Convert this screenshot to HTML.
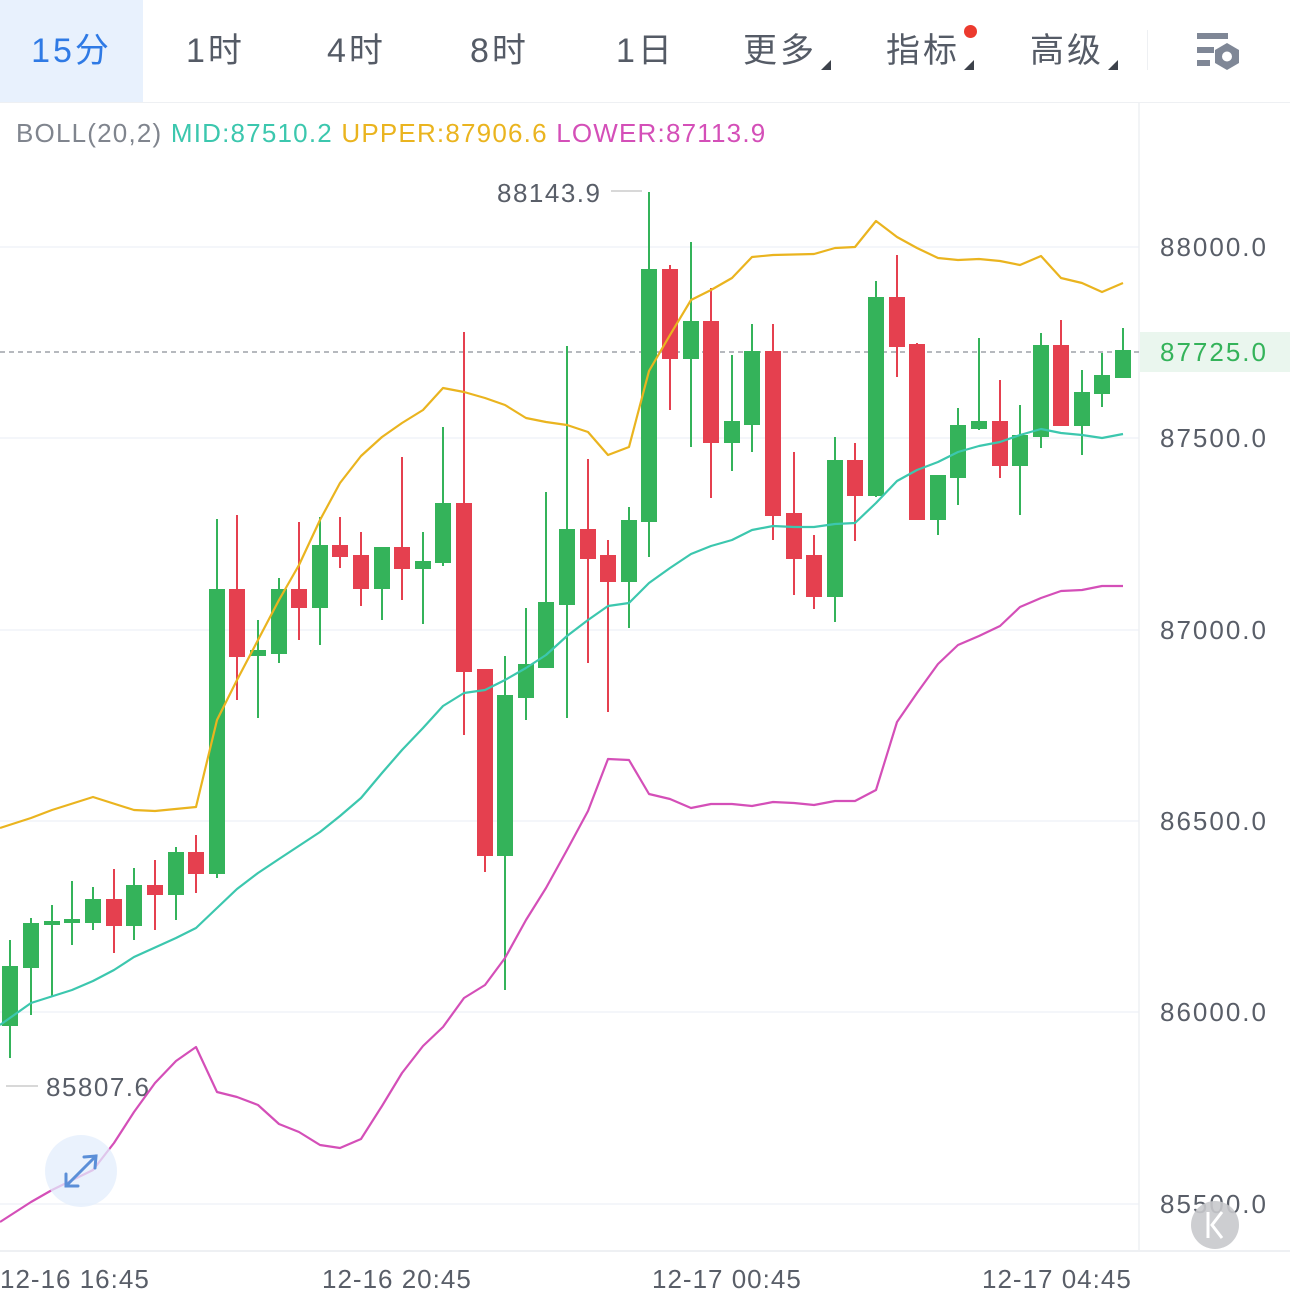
<!DOCTYPE html>
<html><head><meta charset="utf-8"><style>
body{margin:0;width:1290px;height:1293px;background:#fff;overflow:hidden;font-family:"Liberation Sans","Noto Sans CJK SC",sans-serif;position:relative}
.tabs{position:absolute;top:0;left:0;width:1290px;height:102px;border-bottom:1px solid #eef0f3}
.tab{position:absolute;top:0;height:102px;line-height:102px;font-size:34px;color:#555b66;letter-spacing:3px}
.act{left:0;width:143px;background:#e8f1fd;color:#2f7ae5;text-align:center}
.tri{position:absolute;width:0;height:0;border-left:10px solid transparent;border-bottom:10px solid #3d424b}
</style></head><body>
<div class="tabs">
<div class="tab act">15分</div>
<div class="tab" style="left:186px">1时</div>
<div class="tab" style="left:327px">4时</div>
<div class="tab" style="left:470px">8时</div>
<div class="tab" style="left:616px">1日</div>
<div class="tab" style="left:743px">更多</div><div class="tri" style="left:821px;top:60px"></div>
<div class="tab" style="left:886px">指标</div><div class="tri" style="left:964px;top:60px"></div>
<div style="position:absolute;left:964px;top:25px;width:13px;height:13px;border-radius:50%;background:#ec3a2e"></div>
<div class="tab" style="left:1030px">高级</div><div class="tri" style="left:1108px;top:60px"></div>
<div style="position:absolute;left:1147px;top:30px;width:1px;height:40px;background:#eef0f3"></div>
<svg style="position:absolute;left:1190px;top:25px" width="60" height="50" viewBox="1190 25 60 50">
<rect x="1197" y="33" width="31" height="6" fill="#7f8796"/>
<rect x="1197" y="47" width="17" height="6" fill="#7f8796"/>
<rect x="1197" y="60" width="13" height="6" fill="#7f8796"/>
<polygon points="1227,43 1239,50 1239,63 1227,70 1215,63 1215,50" fill="#7f8796"/>
<circle cx="1227" cy="56.5" r="5" fill="#fff"/>
</svg>
</div>
<div style="position:absolute;left:16px;top:118px;font-size:26px;white-space:nowrap;letter-spacing:1.2px"><span style="color:#80858e">BOLL(20,2)</span> <span style="color:#3cc7ae">MID:87510.2</span> <span style="color:#eab41f">UPPER:87906.6</span> <span style="color:#d44fb8">LOWER:87113.9</span></div>
<svg style="position:absolute;left:0;top:0" width="1290" height="1293">
<g stroke="#f0f3f8" stroke-width="1.5">
<line x1="0" y1="247" x2="1139" y2="247"/><line x1="0" y1="438" x2="1139" y2="438"/><line x1="0" y1="630" x2="1139" y2="630"/><line x1="0" y1="821" x2="1139" y2="821"/><line x1="0" y1="1012" x2="1139" y2="1012"/><line x1="0" y1="1204" x2="1139" y2="1204"/>
</g>
<line x1="1139" y1="103" x2="1139" y2="1250" stroke="#eef0f3" stroke-width="1.5"/>
<line x1="0" y1="1251" x2="1290" y2="1251" stroke="#eef0f3" stroke-width="2"/>
<line x1="0" y1="352" x2="1139" y2="352" stroke="#8a8f98" stroke-width="1.2" stroke-dasharray="5,4"/>
<rect x="1140" y="332" width="150" height="40" fill="#eaf6ee"/>
<g font-size="26" fill="#595e68" font-family="Liberation Sans,sans-serif" letter-spacing="2">
<text x="1160" y="256">88000.0</text><text x="1160" y="447">87500.0</text><text x="1160" y="639">87000.0</text><text x="1160" y="830">86500.0</text><text x="1160" y="1021">86000.0</text><text x="1160" y="1213">85500.0</text>
<text x="1160" y="361" fill="#34b35a">87725.0</text>
<text x="497" y="202" letter-spacing="1.5">88143.9</text><text x="46" y="1096" letter-spacing="1.5">85807.6</text>
</g>
<g font-size="26" fill="#595e68" font-family="Liberation Sans,sans-serif" letter-spacing="1">
<text x="0" y="1288">12-16 16:45</text><text x="322" y="1288">12-16 20:45</text><text x="652" y="1288">12-17 00:45</text><text x="982" y="1288">12-17 04:45</text>
</g>
<line x1="611" y1="191" x2="642" y2="191" stroke="#ccc" stroke-width="1.5"/>
<line x1="6" y1="1086" x2="38" y2="1086" stroke="#ccc" stroke-width="1.5"/>
<g stroke="#34b35a" fill="#34b35a" stroke-width="2">
<line x1="10" y1="940" x2="10" y2="1058"/><rect x="3" y="967" width="14" height="58"/>
<line x1="31" y1="918" x2="31" y2="1015"/><rect x="24" y="924" width="14" height="43"/>
<line x1="52" y1="905" x2="52" y2="997"/><rect x="45" y="922" width="14" height="2"/>
<line x1="72" y1="881" x2="72" y2="945"/><rect x="65" y="920" width="14" height="2"/>
<line x1="93" y1="887" x2="93" y2="930"/><rect x="86" y="900" width="14" height="22"/>
<line x1="134" y1="868" x2="134" y2="940"/><rect x="127" y="886" width="14" height="39"/>
<line x1="176" y1="847" x2="176" y2="920"/><rect x="169" y="853" width="14" height="41"/>
<line x1="217" y1="519" x2="217" y2="878"/><rect x="210" y="590" width="14" height="283"/>
<line x1="258" y1="620" x2="258" y2="718"/><rect x="251" y="651" width="14" height="4"/>
<line x1="279" y1="578" x2="279" y2="663"/><rect x="272" y="590" width="14" height="63"/>
<line x1="320" y1="517" x2="320" y2="645"/><rect x="313" y="546" width="14" height="61"/>
<line x1="382" y1="548" x2="382" y2="620"/><rect x="375" y="548" width="14" height="40"/>
<line x1="423" y1="532" x2="423" y2="624"/><rect x="416" y="562" width="14" height="6"/>
<line x1="443" y1="427" x2="443" y2="566"/><rect x="436" y="504" width="14" height="58"/>
<line x1="505" y1="656" x2="505" y2="990"/><rect x="498" y="696" width="14" height="159"/>
<line x1="526" y1="608" x2="526" y2="720"/><rect x="519" y="665" width="14" height="32"/>
<line x1="546" y1="492" x2="546" y2="668"/><rect x="539" y="603" width="14" height="64"/>
<line x1="567" y1="346" x2="567" y2="718"/><rect x="560" y="530" width="14" height="74"/>
<line x1="629" y1="507" x2="629" y2="628"/><rect x="622" y="521" width="14" height="60"/>
<line x1="649" y1="192" x2="649" y2="557"/><rect x="642" y="270" width="14" height="251"/>
<line x1="691" y1="242" x2="691" y2="447"/><rect x="684" y="322" width="14" height="36"/>
<line x1="732" y1="355" x2="732" y2="471"/><rect x="725" y="422" width="14" height="20"/>
<line x1="752" y1="324" x2="752" y2="452"/><rect x="745" y="352" width="14" height="72"/>
<line x1="835" y1="437" x2="835" y2="622"/><rect x="828" y="461" width="14" height="135"/>
<line x1="876" y1="281" x2="876" y2="497"/><rect x="869" y="298" width="14" height="197"/>
<line x1="938" y1="476" x2="938" y2="535"/><rect x="931" y="476" width="14" height="43"/>
<line x1="958" y1="408" x2="958" y2="505"/><rect x="951" y="426" width="14" height="51"/>
<line x1="979" y1="338" x2="979" y2="430"/><rect x="972" y="422" width="14" height="6"/>
<line x1="1020" y1="405" x2="1020" y2="515"/><rect x="1013" y="436" width="14" height="29"/>
<line x1="1041" y1="333" x2="1041" y2="448"/><rect x="1034" y="346" width="14" height="90"/>
<line x1="1082" y1="370" x2="1082" y2="455"/><rect x="1075" y="393" width="14" height="32"/>
<line x1="1102" y1="353" x2="1102" y2="407"/><rect x="1095" y="376" width="14" height="17"/>
<line x1="1123" y1="328" x2="1123" y2="378"/><rect x="1116" y="351" width="14" height="26"/>
</g>
<g stroke="#e5404f" fill="#e5404f" stroke-width="2">
<line x1="114" y1="869" x2="114" y2="953"/><rect x="107" y="900" width="14" height="25"/>
<line x1="155" y1="860" x2="155" y2="930"/><rect x="148" y="886" width="14" height="8"/>
<line x1="196" y1="835" x2="196" y2="893"/><rect x="189" y="853" width="14" height="20"/>
<line x1="237" y1="515" x2="237" y2="700"/><rect x="230" y="590" width="14" height="66"/>
<line x1="299" y1="522" x2="299" y2="640"/><rect x="292" y="590" width="14" height="17"/>
<line x1="340" y1="517" x2="340" y2="568"/><rect x="333" y="546" width="14" height="10"/>
<line x1="361" y1="532" x2="361" y2="606"/><rect x="354" y="556" width="14" height="32"/>
<line x1="402" y1="457" x2="402" y2="600"/><rect x="395" y="548" width="14" height="20"/>
<line x1="464" y1="332" x2="464" y2="735"/><rect x="457" y="504" width="14" height="167"/>
<line x1="485" y1="670" x2="485" y2="872"/><rect x="478" y="670" width="14" height="185"/>
<line x1="588" y1="459" x2="588" y2="663"/><rect x="581" y="530" width="14" height="28"/>
<line x1="608" y1="540" x2="608" y2="712"/><rect x="601" y="556" width="14" height="25"/>
<line x1="670" y1="265" x2="670" y2="410"/><rect x="663" y="270" width="14" height="88"/>
<line x1="711" y1="288" x2="711" y2="498"/><rect x="704" y="322" width="14" height="120"/>
<line x1="773" y1="324" x2="773" y2="540"/><rect x="766" y="352" width="14" height="163"/>
<line x1="794" y1="452" x2="794" y2="595"/><rect x="787" y="514" width="14" height="44"/>
<line x1="814" y1="535" x2="814" y2="609"/><rect x="807" y="556" width="14" height="40"/>
<line x1="855" y1="443" x2="855" y2="541"/><rect x="848" y="461" width="14" height="34"/>
<line x1="897" y1="255" x2="897" y2="377"/><rect x="890" y="298" width="14" height="48"/>
<line x1="917" y1="343" x2="917" y2="520"/><rect x="910" y="345" width="14" height="174"/>
<line x1="1000" y1="380" x2="1000" y2="478"/><rect x="993" y="422" width="14" height="43"/>
<line x1="1061" y1="320" x2="1061" y2="426"/><rect x="1054" y="346" width="14" height="79"/>
</g>
<g fill="none" stroke-width="2.2" stroke-linejoin="round">
<polyline stroke="#eab41f" points="0,828 31,818 52,810 93,797 134,810 155,811 196,807 217,720 237,680 258,640 279,600 299,565 320,520 340,483 361,456 382,437 402,423 423,410 443,388 464,392 485,398 505,405 526,418 546,422 567,425 588,432 608,455 629,447 649,371 670,335 691,300 711,290 732,278 752,257 773,255 814,254 835,248 855,247 876,221 897,237 917,248 938,258 958,260 979,259 1000,261 1020,265 1041,256 1061,278 1082,283 1102,292 1123,283"/>
<polyline stroke="#3cc7ae" points="0,1025 31,1003 72,990 93,981 114,970 134,957 176,938 196,928 217,908 237,889 258,873 279,859 320,832 340,816 361,798 382,773 402,750 423,728 443,706 464,693 485,690 505,680 526,668 546,655 567,636 588,620 608,606 629,603 649,583 670,568 691,554 711,546 732,540 752,530 773,526 794,527 814,527 835,524 855,523 876,503 897,481 917,470 938,462 958,452 979,446 1000,442 1020,435 1041,429 1061,433 1082,435 1102,438 1123,434"/>
<polyline stroke="#d44fb8" points="0,1222 31,1202 52,1190 93,1170 114,1143 134,1112 155,1083 176,1061 196,1047 217,1092 237,1097 258,1105 279,1124 299,1132 320,1145 340,1148 361,1139 382,1106 402,1073 423,1046 443,1027 464,998 485,985 505,958 526,920 546,888 567,850 588,811 608,759 629,760 649,794 670,799 691,808 711,804 732,804 752,806 773,802 794,803 814,805 835,801 855,801 876,790 897,722 917,693 938,664 958,645 979,636 1000,626 1020,607 1041,598 1061,591 1082,590 1102,586 1123,586"/>
</g>
<circle cx="81" cy="1171" r="36" fill="#e3eefc" opacity="0.75"/>
<g stroke="#5b8fd8" stroke-width="3" fill="none" stroke-linecap="round">
<line x1="66" y1="1186" x2="96" y2="1156"/><polyline points="84,1157 96,1156 95,1168"/><polyline points="66,1174 66,1186 78,1186"/>
</g>
<circle cx="1215" cy="1225" r="24" fill="#c8c9cc" opacity="0.9"/>
<g stroke="#fff" stroke-width="3" fill="none"><line x1="1208" y1="1212" x2="1208" y2="1238"/><polyline points="1222,1212 1212,1225 1222,1238"/></g>
</svg>
</body></html>
